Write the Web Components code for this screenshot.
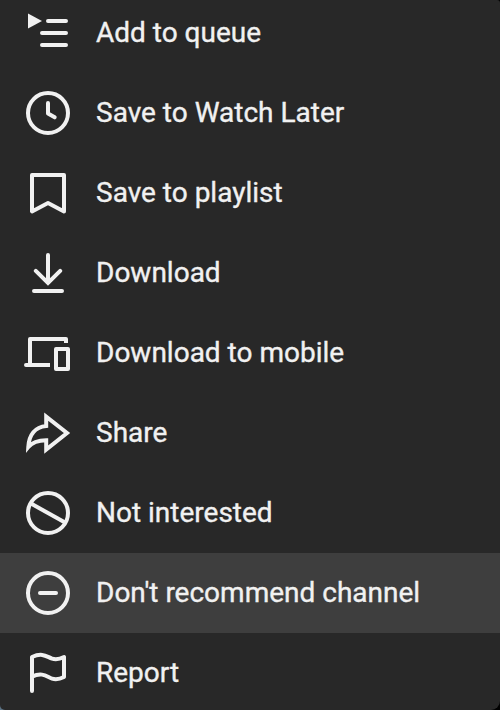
<!DOCTYPE html>
<html lang="en">
<head>
<meta charset="utf-8">
<title>Video menu</title>
<style>
	html, body {
		margin: 0;
		height: 100%;
		overflow: hidden;
	}
	body {
		background: linear-gradient(90deg, #5d7486 50%, #000 50%);
		font-family: Roboto, "Liberation Sans", sans-serif;
	}
</style>
</head>
<body>
<video-menu>
	<menu-row icon="queue">Add to queue</menu-row>
	<menu-row icon="clock">Save to Watch Later</menu-row>
	<menu-row icon="bookmark">Save to playlist</menu-row>
	<menu-row icon="download">Download</menu-row>
	<menu-row icon="devices">Download to mobile</menu-row>
	<menu-row icon="share">Share</menu-row>
	<menu-row icon="block">Not interested</menu-row>
	<menu-row icon="minus" active>Don't recommend channel</menu-row>
	<menu-row icon="flag">Report</menu-row>
</video-menu>

<script>
// 48x48 outlines, stroked with the current colour
const ICONS = {
	queue: '<path d="M4 4.5L18 12L4 19.5Z" fill="currentColor" stroke="none"/><path d="M24 12H42M18 24H42M18 36H42"/>',
	clock: '<circle cx="24" cy="24" r="20"/><path d="M24 14V24.5L30.7 28.3"/>',
	bookmark: '<path d="M8 6H40V42.4L24 34L8 42.4Z"/>',
	download: '<path stroke-linejoin="miter" d="M24 6V33M11.8 21.8L24 34L36.2 21.8M10 42H38"/>',
	devices: '<path stroke-linecap="butt" d="M42 14V10H6V36M26 36H2"/><path d="M2 36H6M32 20H44V40H32Z"/>',
	share: '<path stroke-linejoin="miter" d="M22.2 17V7.7L43 24L22.2 40.5V31.2C14 31.2 8 33.5 4.3 38C5 26 11 18 22.2 17Z"/>',
	block: '<circle cx="24" cy="24" r="20"/><path stroke-linecap="butt" d="M6.5 14.3L41.5 33.7"/>',
	minus: '<circle cx="24" cy="24" r="20"/><path d="M16 24H32"/>',
	flag: '<path d="M8 42V8C19 3 23 8 28 9.6C32 10.8 36 10 40 8V28C36 30 32 30.8 28 29.6C23 28 19 22.6 8 27.6"/>'
};

class MenuIcon extends HTMLElement {

	constructor() {
		super();
		this.attachShadow({ mode: 'open' });
	}

	connectedCallback() {
		this.shadowRoot.innerHTML = `
			<style>
			:host {
				display: block;
				flex: none;
				width: 48px;
				height: 48px;
			}
			svg {
				display: block;
			}
			</style>
			<svg width="48" height="48" viewBox="0 0 48 48" fill="none" stroke="currentColor" stroke-width="4" stroke-linecap="round" stroke-linejoin="round">${ICONS[this.getAttribute('name')]}</svg>
		`;
	}
}

class MenuRow extends HTMLElement {

	constructor() {
		super();
		this.attachShadow({ mode: 'open' });
	}

	connectedCallback() {
		this.shadowRoot.innerHTML = `
			<style>
			:host {
				display: flex;
				align-items: center;
				gap: 24px;
				box-sizing: border-box;
				flex: none;
				height: 80px;
				padding: 0 24px;
				cursor: pointer;
			}
			:host([active]) {
				background: #3e3e3e;
			}
			.label {
				font-size: 28px;
				line-height: 40px;
				white-space: nowrap;
				-webkit-text-stroke: 0.35px currentColor;
			}
			</style>
			<menu-icon name="${this.getAttribute('icon')}"></menu-icon>
			<span class="label"><slot></slot></span>
		`;
	}
}

class VideoMenu extends HTMLElement {

	constructor() {
		super();
		this.attachShadow({ mode: 'open' });
		this.shadowRoot.innerHTML = `
			<style>
			:host {
				display: block;
				height: 710px;
				overflow: hidden;
				background: #282828;
				color: #f1f1f1;
				border-radius: 0 3px 9px 5px;
			}
			.list {
				display: flex;
				flex-direction: column;
				margin-top: -7px;
			}
			</style>
			<div class="list"><slot></slot></div>
		`;
	}
}

customElements.define('menu-icon', MenuIcon);
customElements.define('menu-row', MenuRow);
customElements.define('video-menu', VideoMenu);
</script>
</body>
</html>
